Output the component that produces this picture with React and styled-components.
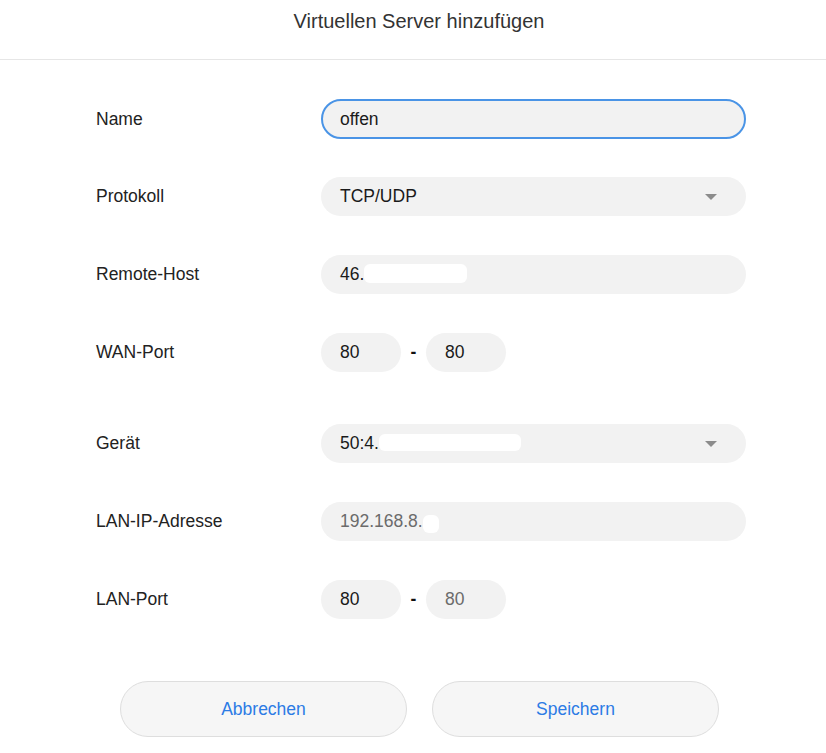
import React from 'react';
import styled, { createGlobalStyle } from 'styled-components';

const GlobalStyle = createGlobalStyle`
    html, body {
        margin: 0;
        padding: 0;
        background: #ffffff;
        font-family: "Liberation Sans", Arial, sans-serif;
    }
`;

const Header = styled.div`
    height: 60px;
    border-bottom: 1px solid #e6e6e6;
    display: flex;
    justify-content: center;
    padding-left: 12px;
    box-sizing: border-box;
    & > h1 {
        margin: 9px 0 0 0;
        font-size: 20px;
        font-weight: normal;
        color: #333333;
        line-height: 24px;
    }
`;

const Form = styled.div`
    padding: 39px 0 0 96px;
    display: flex;
    flex-direction: column;
`;

const Row = styled.div`
    display: grid;
    grid-template-columns: 225px 425px;
    align-items: center;
    height: 39px;
    margin-bottom: ${p => p.$gap || 39}px;
`;

const Label = styled.div`
    font-size: 17.5px;
    color: #222222;
`;

const Field = styled.div`
    height: ${p => (p.$focused ? 40 : 39)}px;
    box-sizing: border-box;
    width: ${p => p.$width || 425}px;
    border-radius: 20px;
    background: #f2f2f2;
    border: ${p => (p.$focused ? '2px solid #4a94e6' : 'none')};
    padding-left: ${p => (p.$focused ? 17 : 19)}px;
    padding-right: 29px;
    display: flex;
    align-items: center;
    font-size: 17.5px;
    color: ${p => (p.$muted ? '#6b6b6b' : '#1a1a1a')};
`;

const Value = styled.span`
    flex: 1;
    display: flex;
    align-items: center;
`;

const Redacted = styled.span`
    display: inline-block;
    width: ${p => p.$w}px;
    height: ${p => p.$h}px;
    background: #ffffff;
    border-radius: 6px;
    margin-top: ${p => p.$dy || 0}px;
`;

const Arrow = styled.span`
    width: 0;
    height: 0;
    border-left: 6px solid transparent;
    border-right: 6px solid transparent;
    border-top: 6px solid #8c8c8c;
`;

const PortGroup = styled.div`
    display: flex;
    align-items: center;
`;

const Dash = styled.span`
    width: 25px;
    text-align: center;
    font-size: 17.5px;
    font-weight: bold;
    color: #111111;
`;

const Buttons = styled.div`
    display: flex;
    gap: 25px;
    padding: 23px 0 0 24px;
`;

const Button = styled.button`
    width: 287px;
    height: 56px;
    border-radius: 28px;
    border: 1px solid #dedede;
    background: #f6f6f6;
    color: #2c7be5;
    font-family: "Liberation Sans", Arial, sans-serif;
    font-size: 17.5px;
    cursor: pointer;
`;

const App = () => {
    return (
        <>
            <GlobalStyle />
            <Header><h1>Virtuellen Server hinzufügen</h1></Header>
            <Form>
                <Row>
                    <Label>Name</Label>
                    <Field $focused>offen</Field>
                </Row>
                <Row>
                    <Label>Protokoll</Label>
                    <Field><Value>TCP/UDP</Value><Arrow /></Field>
                </Row>
                <Row>
                    <Label>Remote-Host</Label>
                    <Field><Value>46.<Redacted $w={103} $h={19} $dy={-2} /></Value></Field>
                </Row>
                <Row $gap={52}>
                    <Label>WAN-Port</Label>
                    <PortGroup>
                        <Field $width={80}>80</Field>
                        <Dash>-</Dash>
                        <Field $width={80}>80</Field>
                    </PortGroup>
                </Row>
                <Row>
                    <Label>Gerät</Label>
                    <Field><Value>50:4.<Redacted $w={142} $h={17} $dy={-2} /></Value><Arrow /></Field>
                </Row>
                <Row>
                    <Label>LAN-IP-Adresse</Label>
                    <Field $muted><Value>192.168.8.<Redacted $w={16} $h={18} $dy={4} /></Value></Field>
                </Row>
                <Row>
                    <Label>LAN-Port</Label>
                    <PortGroup>
                        <Field $width={80}>80</Field>
                        <Dash>-</Dash>
                        <Field $width={80} $muted>80</Field>
                    </PortGroup>
                </Row>
                <Buttons>
                    <Button>Abbrechen</Button>
                    <Button>Speichern</Button>
                </Buttons>
            </Form>
        </>
    );
};

export default App;
